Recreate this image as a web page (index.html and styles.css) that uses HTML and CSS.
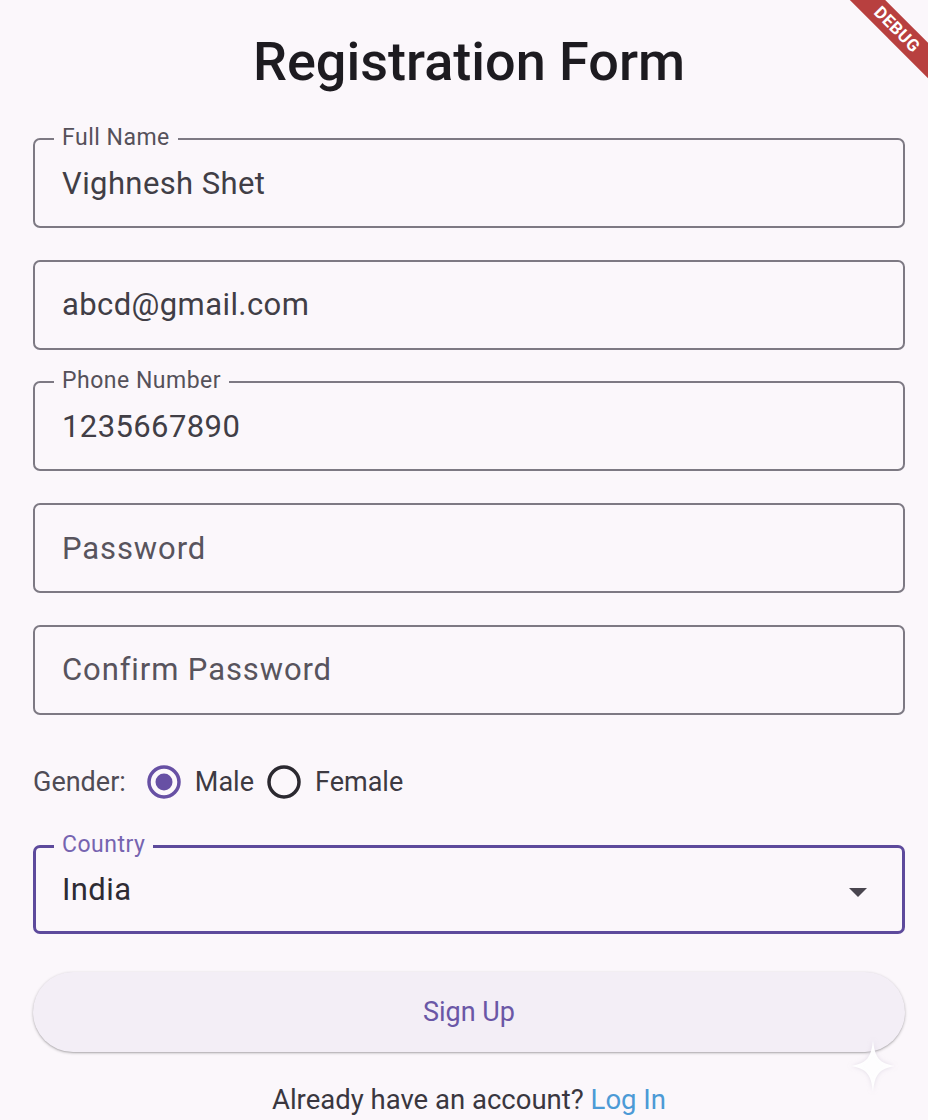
FILE: index.html
```html
<!DOCTYPE html>
<html>
<head>
<meta charset="utf-8">
<link rel="stylesheet" href="styles.css">
</head>
<body>
<div class="page">
  <h1 class="title">Registration Form</h1>
  <div class="form">
    <div class="field"><span class="flabel">Full Name</span><span class="value">Vighnesh Shet</span></div>
    <div class="field"><span class="value">abcd@gmail.com</span></div>
    <div class="field"><span class="flabel">Phone Number</span><span class="value">1235667890</span></div>
    <div class="field"><span class="hint">Password</span></div>
    <div class="field"><span class="hint">Confirm Password</span></div>
    <div class="gender">
      <span class="glabel">Gender:</span>
      <svg class="radio" width="34" height="34" viewBox="0 0 34 34"><circle cx="17" cy="17" r="15" fill="none" stroke="#6750a4" stroke-width="3.5"/><circle cx="17" cy="17" r="8.5" fill="#6750a4"/></svg>
      <span class="opt">Male</span>
      <svg class="radio" width="34" height="34" viewBox="0 0 34 34"><circle cx="17" cy="17" r="15" fill="none" stroke="#2b2930" stroke-width="3.5"/></svg>
      <span class="opt">Female</span>
    </div>
    <div class="field country"><span class="flabel clabel">Country</span><span class="value">India</span><span class="arrow"></span></div>
    <div class="button">Sign Up</div>
    <div class="login">Already have an account? <span class="link">Log In</span></div>
  </div>
</div>
<svg class="sparkle" width="44" height="52" viewBox="0 0 44 52"><path d="M22 0 C24 18 28 23 44 26 C28 29 24 34 22 52 C20 34 16 29 0 26 C16 23 20 18 22 0 Z" fill="#ffffff" opacity="0.95"/></svg>
<div class="debug">DEBUG</div>
</body>
</html>
```
FILE: styles.css
```css
html, body {
  margin: 0;
  padding: 0;
}
body {
  background: #fbf7fb;
  font-family: Roboto, "Liberation Sans", sans-serif;
  width: 928px;
  height: 1120px;
  overflow: hidden;
  position: relative;
}
.page {
  padding: 30px 23px 0 33px;
}
.title {
  margin: 0;
  font-size: 54px;
  line-height: 64px;
  font-weight: 500;
  color: #1d1b20;
  text-align: center;
}
.form {
  margin-top: 44px;
  display: flex;
  flex-direction: column;
}
.field {
  position: relative;
  box-sizing: border-box;
  height: 90px;
  border: 2px solid #7d7983;
  border-radius: 7px;
  display: flex;
  align-items: center;
  padding-left: 27px;
  margin-bottom: 31.7px;
}
.flabel {
  position: absolute;
  top: -15px;
  left: 19px;
  padding: 0 8px;
  background: #fbf7fb;
  font-size: 23px;
  line-height: 26px;
  letter-spacing: 0.5px;
  color: #55515a;
}
.value {
  font-size: 31px;
  letter-spacing: 0.4px;
  color: #413e46;
}
.hint {
  font-size: 31px;
  letter-spacing: 0.9px;
  color: #58545d;
}
.gender {
  margin-top: 16px;
  height: 40px;
  display: flex;
  align-items: center;
  font-size: 27px;
  color: #3d3a42;
}
.glabel {
  color: #4f4b55;
  margin-right: 21px;
}
.radio {
  margin-right: 14px;
}
.opt {
  margin-right: 13px;
}
.country {
  margin-top: 43px;
  height: 89px;
  border: 3px solid #5d4a9c;
  padding-left: 26px;
  margin-bottom: 0;
}
.country .flabel {
  top: -16px;
  left: 18px;
}
.clabel {
  color: #7664b0;
}
.country .value {
  color: #2e2b33;
}
.arrow {
  position: absolute;
  right: 35px;
  top: 40px;
  width: 0;
  height: 0;
  border-left: 9px solid transparent;
  border-right: 9px solid transparent;
  border-top: 9px solid #49454f;
}
.button {
  margin-top: 38px;
  height: 80px;
  border-radius: 40px;
  background: #f3eef6;
  box-shadow: 0 1px 3px rgba(0, 0, 0, 0.28), 0 1px 1px rgba(0, 0, 0, 0.08);
  display: flex;
  align-items: center;
  justify-content: center;
  font-size: 27px;
  color: #6a57a6;
}
.login {
  margin-top: 33px;
  text-align: center;
  font-size: 27.5px;
  line-height: 30px;
  color: #3a373f;
}
.link {
  color: #4c9ad6;
}
.sparkle {
  position: absolute;
  left: 851px;
  top: 1040px;
  filter: drop-shadow(0 0 2px rgba(200, 190, 210, 0.5));
}
.debug {
  position: absolute;
  left: 817px;
  top: 17px;
  width: 160px;
  height: 25px;
  line-height: 25px;
  background: #b8403f;
  color: #ffffff;
  font-size: 17px;
  font-weight: 700;
  text-align: center;
  letter-spacing: 0.5px;
  transform: rotate(45deg);
}
```
